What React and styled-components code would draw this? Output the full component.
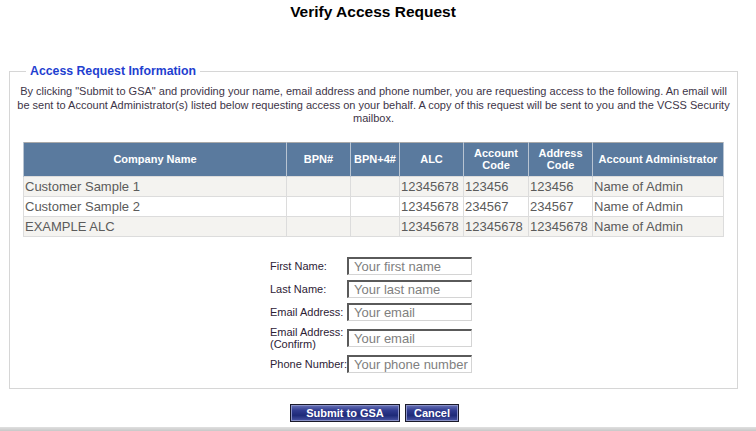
import React from 'react';
import styled, { createGlobalStyle } from 'styled-components';

const GlobalStyle = createGlobalStyle`
  html, body {
    margin: 0;
    padding: 0;
    background: #fff;
    font-family: "Liberation Sans", Arial, sans-serif;
  }
`;

const rows = [
  { name: 'Customer Sample 1', bpn: '', bpn4: '', alc: '12345678', account: '123456', address: '123456', admin: 'Name of Admin' },
  { name: 'Customer Sample 2', bpn: '', bpn4: '', alc: '12345678', account: '234567', address: '234567', admin: 'Name of Admin' },
  { name: 'EXAMPLE ALC', bpn: '', bpn4: '', alc: '12345678', account: '12345678', address: '12345678', admin: 'Name of Admin' },
];

const fields = [
  { label: 'First Name:', placeholder: 'Your first name' },
  { label: 'Last Name:', placeholder: 'Your last name' },
  { label: 'Email Address:', placeholder: 'Your email' },
  { label: ['Email Address:', '(Confirm)'], placeholder: 'Your email', tall: true },
  { label: 'Phone Number:', placeholder: 'Your phone number' },
];

export default function App() {
  return (
    <PageSC>
      <GlobalStyle />
      <TitleSC>Verify Access Request</TitleSC>
      <FieldsetSC>
        <LegendSC>Access Request Information</LegendSC>
        <IntroSC>
          By clicking "Submit to GSA" and providing your name, email address and phone number, you are requesting access to the following. An email will be sent to Account Administrator(s) listed below requesting access on your behalf. A copy of this request will be sent to you and the VCSS Security mailbox.
        </IntroSC>
        <TableSC>
          <colgroup>
            <col style={{ width: 263 }} />
            <col style={{ width: 64 }} />
            <col style={{ width: 49 }} />
            <col style={{ width: 64 }} />
            <col style={{ width: 65 }} />
            <col style={{ width: 64 }} />
            <col />
          </colgroup>
          <thead>
            <tr>
              <th>Company Name</th>
              <th>BPN#</th>
              <th>BPN+4#</th>
              <th>ALC</th>
              <th>Account<br />Code</th>
              <th>Address<br />Code</th>
              <th>Account Administrator</th>
            </tr>
          </thead>
          <tbody>
            {rows.map((r, i) => (
              <RowSC key={r.name} $alt={i % 2 === 1}>
                <td>{r.name}</td>
                <td>{r.bpn}</td>
                <td>{r.bpn4}</td>
                <td>{r.alc}</td>
                <td>{r.account}</td>
                <td>{r.address}</td>
                <td>{r.admin}</td>
              </RowSC>
            ))}
          </tbody>
        </TableSC>
        <FormSC>
          {fields.map((f, i) => (
            <React.Fragment key={i}>
              <LabelSC>
                {Array.isArray(f.label) ? (
                  <>
                    {f.label[0]}
                    <br />
                    {f.label[1]}
                  </>
                ) : (
                  f.label
                )}
              </LabelSC>
              <InputSC placeholder={f.placeholder} $tall={f.tall} />
            </React.Fragment>
          ))}
        </FormSC>
      </FieldsetSC>
      <ButtonsSC>
        <ButtonSC $w={110}>Submit to GSA</ButtonSC>
        <ButtonSC $w={54}>Cancel</ButtonSC>
      </ButtonsSC>
      <BottomBarSC />
    </PageSC>
  );
}

const PageSC = styled.div`
  width: 756px;
  height: 431px;
  overflow: hidden;
  display: flex;
  flex-direction: column;
`;

const TitleSC = styled.h1`
  margin: 3px 0 0;
  font-size: 15.5px;
  font-weight: 700;
  text-align: center;
  line-height: 18px;
  color: #000;
  padding-right: 10px;
`;

const FieldsetSC = styled.fieldset`
  margin: 43px 0 0 9px;
  width: 729px;
  height: 325px;
  box-sizing: border-box;
  border: 1px solid #d6d6d6;
  padding: 4px 12px 0 13px;
  min-width: 0;
`;

const LegendSC = styled.legend`
  margin-left: 3px;
  padding: 0 4px 0 4px;
  font-size: 12.3px;
  font-weight: 700;
  color: #1f3fd0;
  line-height: 14px;
`;

const IntroSC = styled.p`
  margin: 0 -7px 0 -8px;
  padding-top: 3px;
  font-size: 11px;
  line-height: 13.5px;
  color: #3d3548;
  text-align: center;
`;

const TableSC = styled.table`
  margin-top: 16px;
  width: 701px;
  border-collapse: collapse;
  table-layout: fixed;
  border: 1px solid #a9a9a9;

  th {
    background: #5a7a9e;
    color: #fff;
    font-size: 11px;
    font-weight: 700;
    height: 33px;
    padding: 0;
    line-height: 12px;
    border-left: 1px solid #b8c4d2;
    border-right: 1px solid #b8c4d2;
    text-align: center;
  }
`;

const RowSC = styled.tr`
  background: ${(p) => (p.$alt ? '#ffffff' : '#f4f3f0')};

  td {
    height: 19px;
    padding: 0 0 0 1px;
    font-size: 13px;
    color: #5b5b5b;
    border: 1px solid #dcdcdc;
    white-space: nowrap;
    overflow: hidden;
    line-height: 19px;
  }
`;

const FormSC = styled.div`
  margin: 20px 0 0 247px;
  display: grid;
  grid-template-columns: 77px 125px;
  row-gap: 5px;
  width: 202px;
`;

const LabelSC = styled.label`
  font-size: 11px;
  line-height: 12px;
  color: #2d2235;
  align-self: center;
  white-space: nowrap;
`;

const InputSC = styled.input`
  width: 125px;
  height: 18px;
  box-sizing: border-box;
  border-style: solid;
  border-width: 2px 1px 1px 2px;
  border-color: #5a5a5a #d4d4d4 #d4d4d4 #5a5a5a;
  padding: 0 0 0 5px;
  font-family: "Liberation Sans", Arial, sans-serif;
  font-size: 13px;
  color: #333;
  align-self: center;
  margin: ${(p) => (p.$tall ? '3px 0' : '0')};

  &::placeholder {
    color: #808080;
  }
`;

const ButtonsSC = styled.div`
  margin-top: 15px;
  display: flex;
  justify-content: center;
  gap: 5px;
  padding-right: 7px;
`;

const ButtonSC = styled.button`
  width: ${(p) => p.$w}px;
  height: 18px;
  padding: 0;
  border: 1px solid #1a1a2a;
  background: linear-gradient(#6872b8 0%, #2f3a8e 35%, #1e2a78 65%, #4a55a6 100%);
  color: #fff;
  font-family: "Liberation Sans", Arial, sans-serif;
  font-size: 11px;
  font-weight: 700;
  box-shadow: inset 0 0 0 1px #8a92c8;
  cursor: pointer;
`;

const BottomBarSC = styled.div`
  margin-top: auto;
  height: 4px;
  background: linear-gradient(#e0e0e0, #c8c8c8);
`;
